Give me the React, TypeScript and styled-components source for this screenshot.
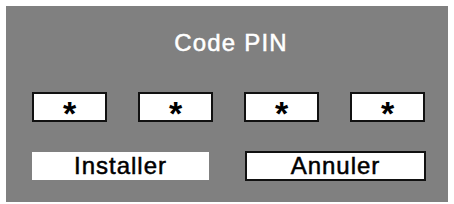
import React from 'react';
import styled, { createGlobalStyle } from 'styled-components';

const GlobalStyle = createGlobalStyle`
  html, body {
    margin: 0;
    padding: 0;
    background: #ffffff;
  }
  body {
    font-family: "Liberation Sans", Arial, sans-serif;
  }
`;

// grey dialog panel
const Panel = styled.div`
  box-sizing: border-box;
  margin: 6px;
  width: 442px;
  height: 196px;
  background-color: #808080;
  padding: 23px 22px 0 26px;
  display: flex;
  flex-direction: column;
  align-items: stretch;
`;

const Title = styled.div`
  color: #ffffff;
  font-size: 24px;
  line-height: 28px;
  letter-spacing: 1.2px;
  -webkit-text-stroke: 0.5px #ffffff;
  text-align: center;
  padding-left: 4px;
`;

const PinRow = styled.div`
  display: flex;
  justify-content: space-between;
  margin-top: 35px;
  width: 393px;
`;

const PinBox = styled.div`
  box-sizing: border-box;
  width: 75px;
  height: 30px;
  background: #ffffff;
  border: 2px solid #111111;
  display: flex;
  justify-content: center;
  align-items: flex-start;
  color: #000000;
  font-size: 34px;
  font-weight: bold;
  line-height: 26px;
`;

const Star = styled.span`
  display: inline-block;
  transform: translateY(6px);
`;

const ButtonRow = styled.div`
  display: flex;
  justify-content: space-between;
  align-items: center;
  margin-top: 29px;
  width: 394px;
`;

const Button = styled.div<{ $outlined?: boolean }>`
  box-sizing: border-box;
  width: ${(p) => (p.$outlined ? '181px' : '177px')};
  height: ${(p) => (p.$outlined ? '30px' : '28px')};
  background: #ffffff;
  border: ${(p) => (p.$outlined ? '2px solid #111111' : 'none')};
  color: #000000;
  font-size: 24px;
  letter-spacing: 1px;
  -webkit-text-stroke: 0.5px #000000;
  display: flex;
  justify-content: center;
  align-items: center;
  line-height: 1;
`;

export default function App() {
  const digits = ['*', '*', '*', '*'];
  return (
    <>
      <GlobalStyle />
      <Panel>
        <Title>Code PIN</Title>
        <PinRow>
          {digits.map((d, i) => (
            <PinBox key={i}>
              <Star>{d}</Star>
            </PinBox>
          ))}
        </PinRow>
        <ButtonRow>
          <Button>Installer</Button>
          <Button $outlined>Annuler</Button>
        </ButtonRow>
      </Panel>
    </>
  );
}
